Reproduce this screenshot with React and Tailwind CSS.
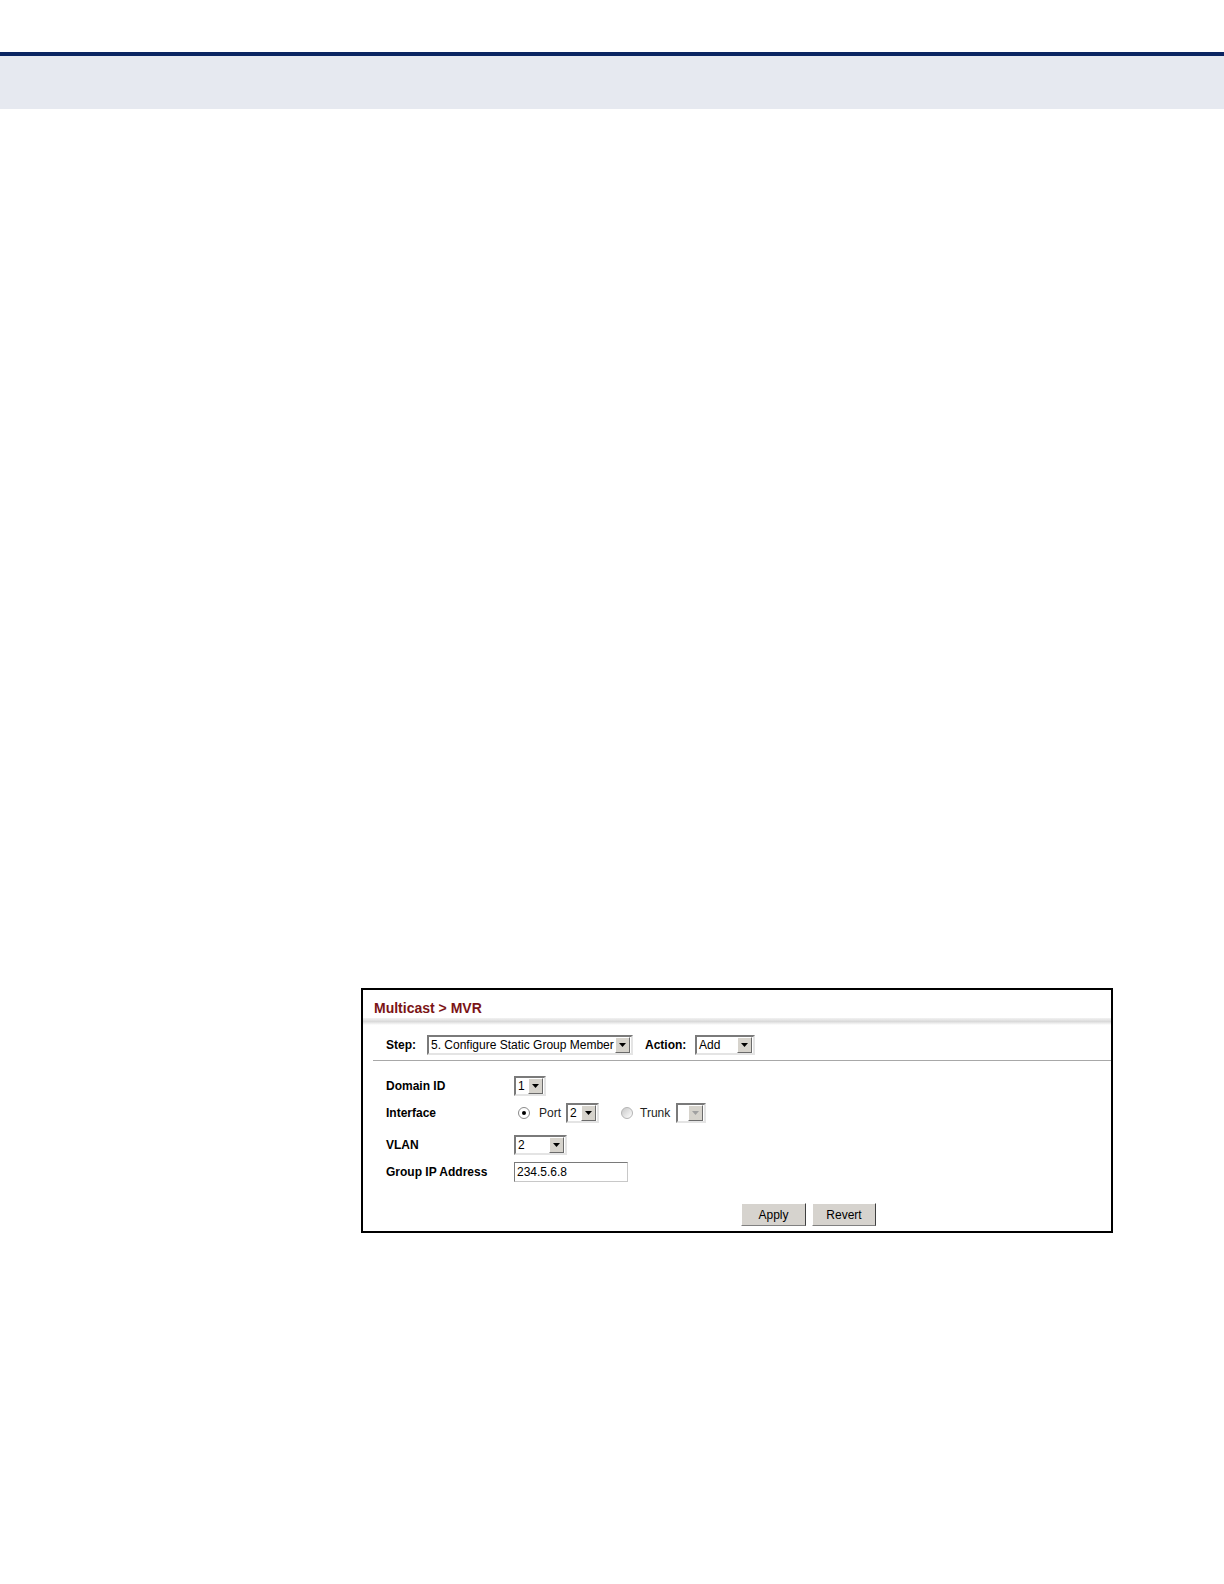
import React from 'react';

function Arrow({ disabled }) {
  return (
    <div className="flex h-[16px] w-[15px] shrink-0 items-center justify-center border border-t-white border-l-white border-r-[#6b6b6b] border-b-[#6b6b6b] bg-[#d6d3cc]">
      <svg width="7" height="4" viewBox="0 0 7 4">
        <path d="M0 0 L7 0 L3.5 4 Z" fill={disabled ? '#a0a0a0' : '#000'} />
      </svg>
    </div>
  );
}

function Select({ value, width, disabled }) {
  return (
    <div
      className={`flex h-[20px] shrink-0 items-center justify-between overflow-hidden border-2 border-t-[#7a7a7a] border-l-[#7a7a7a] border-r-[#e4e4e4] border-b-[#e4e4e4] bg-white pl-[2px] pr-[1px] ${width}`}
    >
      <span className="whitespace-nowrap text-[12px] leading-none text-black">{value}</span>
      <Arrow disabled={disabled} />
    </div>
  );
}

function Radio({ checked }) {
  return (
    <div
      className={`flex h-[12px] w-[12px] shrink-0 items-center justify-center rounded-full border ${
        checked ? 'border-[#8a8a8a] bg-white' : 'border-[#b4b4b4] bg-gradient-to-br from-[#c8c8c8] to-white'
      }`}
    >
      {checked && <div className="h-[4px] w-[4px] rounded-full bg-black" />}
    </div>
  );
}

function Button({ children, width }) {
  return (
    <button className={`h-[23px] border border-t-white border-l-white border-r-[#404040] border-b-[#808080] bg-[#d6d3ce] text-[12px] text-black ${width}`}>
      {children}
    </button>
  );
}

export default function App() {
  return (
    <div className="min-h-[1584px] bg-white" style={{ fontFamily: '"Liberation Sans", Arial, sans-serif' }}>
      <div className="h-[52px]" />
      <div className="h-[4px] bg-[#0b2562]" />
      <div className="h-[53px] bg-[#e6e9f0]" />

      <div className="pl-[361px] pt-[879px]">
        <div className="h-[245px] w-[752px] border-2 border-black bg-white">
          <div className="pl-[11px] pt-[10px] text-[14px] font-bold leading-[16px] text-[#7b1416]">Multicast &gt; MVR</div>
          <div className="mt-[2px] h-[7px] bg-gradient-to-b from-[#f2f2f2] via-[#dadada] to-white" />

          <div className="ml-[10px] flex items-center border-b border-[#a8a8a8] pb-[5px] pl-[13px] pt-[10px]">
            <span className="mr-[12px] w-[29px] text-[12px] font-bold">Step:</span>
            <Select value="5. Configure Static Group Member" width="w-[206px]" />
            <span className="ml-[12px] mr-[10px] w-[40px] whitespace-nowrap text-[12px] font-bold">Action:</span>
            <Select value="Add" width="w-[60px]" />
          </div>

          <div className="ml-[23px] pt-[15px] text-[12px]">
            <div className="flex h-[20px] items-center">
              <span className="w-[128px] font-bold">Domain ID</span>
              <Select value="1" width="w-[32px]" />
            </div>
            <div className="mt-[7px] flex h-[20px] items-center">
              <span className="w-[128px] font-bold">Interface</span>
              <div className="ml-[4px]">
                <Radio checked />
              </div>
              <span className="ml-[9px] w-[27px] text-[12px] text-[#222]">Port</span>
              <Select value="2" width="w-[33px]" />
              <div className="ml-[22px]">
                <Radio />
              </div>
              <span className="ml-[7px] w-[36px] text-[12px] text-[#222]">Trunk</span>
              <Select value="" width="w-[30px]" disabled />
            </div>
            <div className="mt-[12px] flex h-[20px] items-center">
              <span className="w-[128px] font-bold">VLAN</span>
              <Select value="2" width="w-[53px]" />
            </div>
            <div className="mt-[7px] flex h-[20px] items-center">
              <span className="w-[128px] whitespace-nowrap font-bold">Group IP Address</span>
              <div className="flex h-[20px] w-[114px] items-center border border-t-[#7a7a7a] border-l-[#7a7a7a] border-r-[#c8c8c8] border-b-[#c8c8c8] bg-white pl-[2px] text-[12px]">
                234.5.6.8
              </div>
            </div>
          </div>

          <div className="ml-[378px] mt-[21px] flex gap-[6px]">
            <Button width="w-[65px]">Apply</Button>
            <Button width="w-[64px]">Revert</Button>
          </div>
        </div>
      </div>
    </div>
  );
}
